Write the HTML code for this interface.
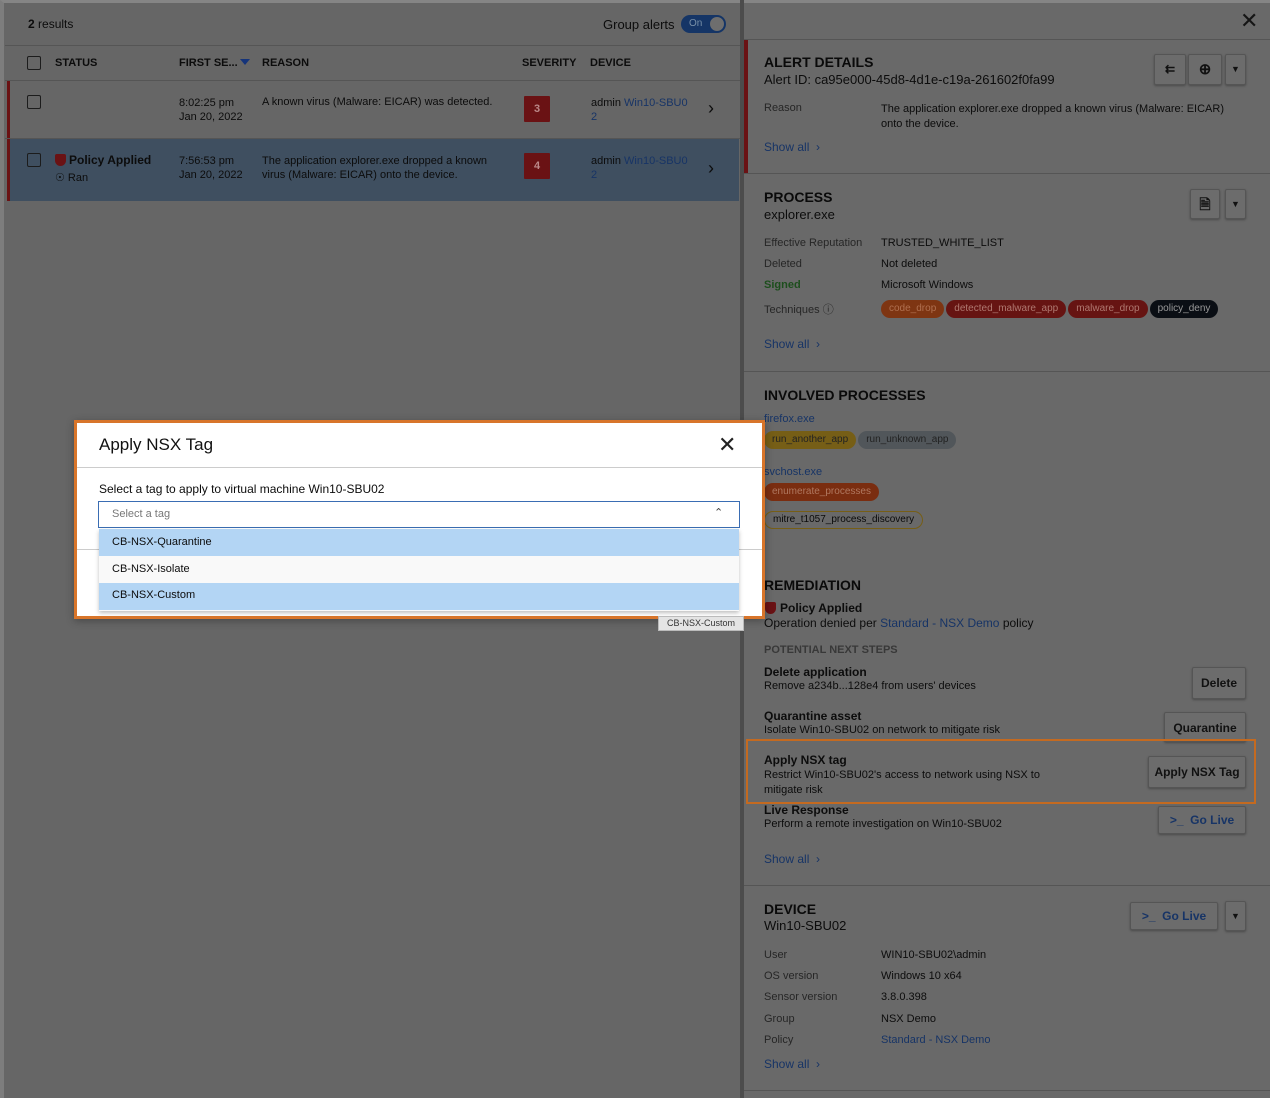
<!DOCTYPE html>
<html><head><meta charset="utf-8"><style>
*{box-sizing:border-box;margin:0;padding:0}
body{width:1270px;height:1098px;background:#6a6a6a;font-family:"Liberation Sans",sans-serif;color:#0c0c0c;position:relative;overflow:hidden;font-size:11px}
.a{position:absolute;white-space:nowrap}
.lnk{color:#173466}
.lbl{color:#262626}
.h{font-weight:bold;font-size:14px;color:#0a0a0a}
.cb{position:absolute;width:14px;height:14px;border:1.5px solid #1c1c1c;border-radius:2px}
.btn{position:absolute;border:1px solid #555;background:#6c6c6c;border-radius:2px;box-shadow:0 1px 2px rgba(0,0,0,.3);font-weight:bold;font-size:12px;text-align:center;color:#111}
.pill{display:inline-block;height:18px;line-height:18px;border-radius:9px;padding:0 8px;font-size:10px;margin-right:2px}
.sev{position:absolute;width:26px;height:26px;background:#6a1214;color:#b88;font-weight:bold;font-size:11px;text-align:center;line-height:26px;border-radius:1px}
.sep{position:absolute;height:1px;background:#555}
</style></head><body>
<div class="a" style="left:0;top:0;width:742px;height:1098px;background:#666;border-left:4px solid #7d7d7d;border-top:3px solid #858585"></div>
<div class="a" style="left:28px;top:17px;font-size:12px"><b>2</b> results</div>
<div class="a" style="left:603px;top:17px;font-size:13px">Group alerts</div>
<div class="a" style="left:681px;top:15px;width:45px;height:18px;border-radius:9px;background:#153566;"><span style="position:absolute;left:8px;top:3px;font-size:10px;color:#7890a8">On</span><span style="position:absolute;right:1px;top:1px;width:16px;height:16px;border-radius:8px;background:#6e6e6e;border:1px solid #153566"></span></div>
<div class="sep" style="left:5px;top:45px;width:736px"></div>
<div class="cb" style="left:27px;top:56px"></div>
<div class="a" style="left:55px;top:57px;font-weight:bold;font-size:11px">STATUS</div>
<div class="a" style="left:179px;top:57px;font-weight:bold;font-size:11px">FIRST SE...</div>
<div class="a" style="left:240px;top:59px;width:0;height:0;border-left:5px solid transparent;border-right:5px solid transparent;border-top:6px solid #15347a"></div>
<div class="a" style="left:262px;top:57px;font-weight:bold;font-size:11px">REASON</div>
<div class="a" style="left:522px;top:57px;font-weight:bold;font-size:11px">SEVERITY</div>
<div class="a" style="left:590px;top:57px;font-weight:bold;font-size:11px">DEVICE</div>
<div class="sep" style="left:5px;top:80px;width:736px"></div>
<div class="a" style="left:7px;top:81px;width:3px;height:57px;background:#6a1214"></div>
<div class="cb" style="left:27px;top:95px"></div>
<div class="a" style="left:179px;top:96px;line-height:14px">8:02:25 pm<br>Jan 20, 2022</div>
<div class="a" style="left:262px;top:96px">A known virus (Malware: EICAR) was detected.</div>
<div class="sev" style="left:524px;top:96px">3</div>
<div class="a" style="left:591px;top:96px;line-height:14px">admin <span class="lnk">Win10-SBU0</span><br><span class="lnk">2</span></div>
<div class="a" style="left:708px;top:98px;font-size:18px">&#8250;</div>
<div class="sep" style="left:5px;top:138px;width:736px"></div>
<div class="a" style="left:7px;top:139px;width:732px;height:62px;background:#3f4f60"></div>
<div class="a" style="left:7px;top:139px;width:3px;height:62px;background:#6a1214"></div>
<div class="cb" style="left:27px;top:153px"></div>
<div class="a" style="left:55px;top:154px;width:11px;height:12px;background:#6a1214;border-radius:2px 2px 6px 6px"></div>
<div class="a" style="left:69px;top:153px;font-weight:bold;font-size:12px">Policy Applied</div>
<div class="a" style="left:55px;top:171px;font-size:11px">&#9737; Ran</div>
<div class="a" style="left:179px;top:154px;line-height:14px">7:56:53 pm<br>Jan 20, 2022</div>
<div class="a" style="left:262px;top:154px;line-height:14px">The application explorer.exe dropped a known<br>virus (Malware: EICAR) onto the device.</div>
<div class="sev" style="left:524px;top:153px">4</div>
<div class="a" style="left:591px;top:154px;line-height:14px">admin <span class="lnk">Win10-SBU0</span><br><span class="lnk">2</span></div>
<div class="a" style="left:708px;top:158px;font-size:18px">&#8250;</div>
<div class="a" style="left:740px;top:0;width:4px;height:1098px;background:#4c4c4c"></div>
<div class="a" style="left:744px;top:0;width:526px;height:1098px;background:#696969;border-top:3px solid #858585"></div>
<div class="a" style="left:1240px;top:8px;font-size:22px;color:#151515">&#10005;</div>
<div class="sep" style="left:744px;top:39px;width:526px"></div>
<div class="a" style="left:744px;top:40px;width:4px;height:133px;background:#6a1214"></div>
<div class="a h" style="left:764px;top:54px">ALERT DETAILS</div>
<div class="a" style="left:764px;top:72px;font-size:13px">Alert ID: ca95e000-45d8-4d1e-c19a-261602f0fa99</div>
<div class="btn" style="left:1154px;top:54px;width:32px;height:31px;line-height:29px">&#8647;</div>
<div class="btn" style="left:1188px;top:54px;width:34px;height:31px;line-height:29px;font-size:15px">&#8853;</div>
<div class="btn" style="left:1225px;top:54px;width:21px;height:31px;line-height:29px;font-size:9px">&#9660;</div>
<div class="a lbl" style="left:764px;top:102px">Reason</div>
<div class="a" style="left:881px;top:102px;line-height:15px">The application explorer.exe dropped a known virus (Malware: EICAR)<br>onto the device.</div>
<div class="a lnk" style="left:764px;top:140px;font-size:12px">Show all &nbsp;&#8250;</div>
<div class="sep" style="left:744px;top:173px;width:526px"></div>
<div class="a h" style="left:764px;top:189px">PROCESS</div>
<div class="a" style="left:764px;top:207px;font-size:13px">explorer.exe</div>
<div class="btn" style="left:1190px;top:189px;width:30px;height:30px;line-height:28px;font-size:14px">&#128462;</div>
<div class="btn" style="left:1225px;top:189px;width:21px;height:30px;line-height:28px;font-size:9px">&#9660;</div>
<div class="a lbl" style="left:764px;top:237px">Effective Reputation</div><div class="a" style="left:881px;top:237px">TRUSTED_WHITE_LIST</div>
<div class="a lbl" style="left:764px;top:258px">Deleted</div><div class="a" style="left:881px;top:258px">Not deleted</div>
<div class="a" style="left:764px;top:279px;color:#1d4e1d;font-weight:bold">Signed</div><div class="a" style="left:881px;top:279px">Microsoft Windows</div>
<div class="a lbl" style="left:764px;top:301px">Techniques &#9432;</div>
<div class="a" style="left:881px;top:300px"><span class="pill" style="background:#7e3512;color:#b07050">code_drop</span><span class="pill" style="background:#661412;color:#b07870">detected_malware_app</span><span class="pill" style="background:#661412;color:#b07870">malware_drop</span><span class="pill" style="background:#0a0e14;color:#999">policy_deny</span></div>
<div class="a lnk" style="left:764px;top:337px;font-size:12px">Show all &nbsp;&#8250;</div>
<div class="sep" style="left:744px;top:371px;width:526px"></div>
<div class="a h" style="left:764px;top:387px">INVOLVED PROCESSES</div>
<div class="a lnk" style="left:764px;top:413px">firefox.exe</div>
<div class="a" style="left:764px;top:431px"><span class="pill" style="background:#765e16;color:#222">run_another_app</span><span class="pill" style="background:#51565a;color:#222">run_unknown_app</span></div>
<div class="a lnk" style="left:764px;top:466px">svchost.exe</div>
<div class="a" style="left:764px;top:483px"><span class="pill" style="background:#7a2d10;color:#b07860">enumerate_processes</span></div>
<div class="a" style="left:764px;top:511px"><span class="pill" style="border:1.5px solid #765e16;color:#0a0a0a;line-height:15px">mitre_t1057_process_discovery</span></div>
<div class="a h" style="left:764px;top:577px">REMEDIATION</div>
<div class="a" style="left:765px;top:602px;width:11px;height:12px;background:#6a1214;border-radius:2px 2px 6px 6px"></div>
<div class="a" style="left:780px;top:601px;font-weight:bold;font-size:12px">Policy Applied</div>
<div class="a" style="left:764px;top:616px;font-size:12px">Operation denied per <span class="lnk">Standard - NSX Demo</span> policy</div>
<div class="a" style="left:764px;top:644px;color:#383838;font-weight:bold">POTENTIAL NEXT STEPS</div>
<div class="a" style="left:764px;top:665px;font-weight:bold;font-size:12px">Delete application</div>
<div class="a" style="left:764px;top:680px">Remove a234b...128e4 from users' devices</div>
<div class="btn" style="left:1192px;top:667px;width:54px;height:32px;line-height:30px">Delete</div>
<div class="a" style="left:764px;top:709px;font-weight:bold;font-size:12px">Quarantine asset</div>
<div class="a" style="left:764px;top:724px">Isolate Win10-SBU02 on network to mitigate risk</div>
<div class="btn" style="left:1164px;top:712px;width:82px;height:30px;line-height:30px">Quarantine</div>
<div class="a" style="left:746px;top:739px;width:510px;height:65px;border:2px solid #c46a20"></div>
<div class="a" style="left:764px;top:753px;font-weight:bold;font-size:12px">Apply NSX tag</div>
<div class="a" style="left:764px;top:768px;line-height:15px">Restrict Win10-SBU02's access to network using NSX to<br>mitigate risk</div>
<div class="btn" style="left:1148px;top:756px;width:98px;height:32px;line-height:30px">Apply NSX Tag</div>
<div class="a" style="left:764px;top:803px;font-weight:bold;font-size:12px">Live Response</div>
<div class="a" style="left:764px;top:818px">Perform a remote investigation on Win10-SBU02</div>
<div class="btn" style="left:1158px;top:806px;width:88px;height:28px;line-height:26px;color:#173466">&gt;_ &nbsp;Go Live</div>
<div class="a lnk" style="left:764px;top:852px;font-size:12px">Show all &nbsp;&#8250;</div>
<div class="sep" style="left:744px;top:885px;width:526px"></div>
<div class="a h" style="left:764px;top:901px">DEVICE</div>
<div class="a" style="left:764px;top:918px;font-size:13px">Win10-SBU02</div>
<div class="btn" style="left:1130px;top:902px;width:88px;height:28px;line-height:26px;color:#173466">&gt;_ &nbsp;Go Live</div>
<div class="btn" style="left:1225px;top:901px;width:21px;height:30px;line-height:28px;font-size:9px">&#9660;</div>
<div class="a lbl" style="left:764px;top:949px">User</div><div class="a" style="left:881px;top:949px">WIN10-SBU02\admin</div>
<div class="a lbl" style="left:764px;top:970px">OS version</div><div class="a" style="left:881px;top:970px">Windows 10 x64</div>
<div class="a lbl" style="left:764px;top:991px">Sensor version</div><div class="a" style="left:881px;top:991px">3.8.0.398</div>
<div class="a lbl" style="left:764px;top:1013px">Group</div><div class="a" style="left:881px;top:1013px">NSX Demo</div>
<div class="a lbl" style="left:764px;top:1034px">Policy</div><div class="a lnk" style="left:881px;top:1034px">Standard - NSX Demo</div>
<div class="a lnk" style="left:764px;top:1057px;font-size:12px">Show all &nbsp;&#8250;</div>
<div class="sep" style="left:744px;top:1090px;width:526px"></div>
<div class="a" style="left:74px;top:420px;width:691px;height:199px;background:#fff;border:3px solid #d8752a;box-shadow:0 2px 8px rgba(0,0,0,.3)"></div>
<div class="a" style="left:99px;top:435px;font-size:17px;color:#111">Apply NSX Tag</div>
<div class="a" style="left:718px;top:432px;font-size:22px;color:#222">&#10005;</div>
<div class="a" style="left:77px;top:467px;width:685px;height:1px;background:#ccc"></div>
<div class="a" style="left:99px;top:482px;font-size:12px">Select a tag to apply to virtual machine Win10-SBU02</div>
<div class="a" style="left:98px;top:501px;width:642px;height:27px;border:1px solid #3a6db3;background:#fff"></div>
<div class="a" style="left:112px;top:508px;color:#777;font-size:11px">Select a tag</div>
<div class="a" style="left:714px;top:506px;font-size:11px;color:#444">&#8963;</div>
<div class="a" style="left:77px;top:549px;width:685px;height:1px;background:#ccc"></div>
<div class="a" style="left:99px;top:529px;width:640px;height:82px;box-shadow:0 2px 4px rgba(0,0,0,.25);background:#f9f9f9"></div>
<div class="a" style="left:99px;top:529px;width:640px;height:27px;background:#b3d5f4"></div>
<div class="a" style="left:99px;top:583px;width:640px;height:27px;background:#b3d5f4"></div>
<div class="a" style="left:112px;top:536px;font-size:11px">CB-NSX-Quarantine</div>
<div class="a" style="left:112px;top:563px;font-size:11px">CB-NSX-Isolate</div>
<div class="a" style="left:112px;top:589px;font-size:11px">CB-NSX-Custom</div>
<div class="a" style="left:658px;top:616px;width:86px;height:15px;background:#e4e4e4;border:1px solid #bbb;font-size:9px;color:#333;text-align:center;line-height:13px">CB-NSX-Custom</div>
</body></html>
